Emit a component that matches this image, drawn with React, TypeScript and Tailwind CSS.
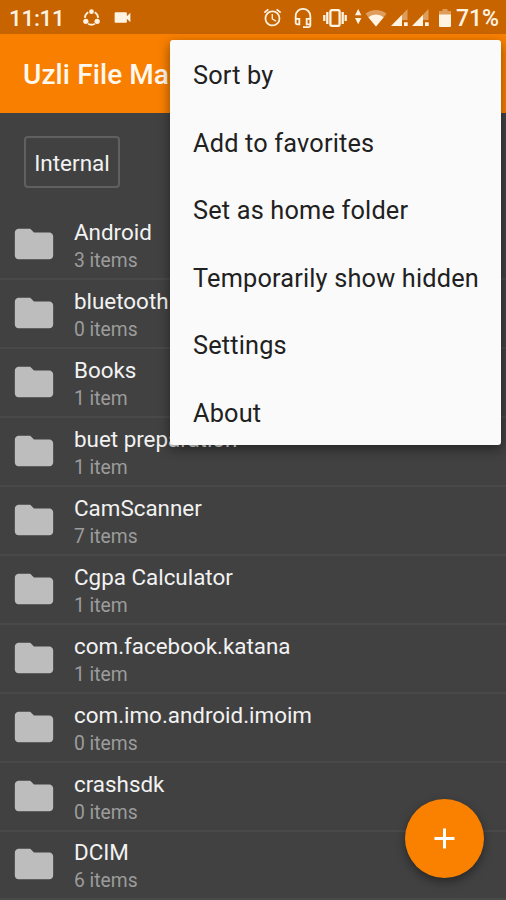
import * as React from "react"
import { MdAlarm, MdFolder, MdVideocam, MdOutlineHeadsetMic } from "react-icons/md"

interface Folder {
  name: string
  info: string
}

const folders: Folder[] = [
  { name: "Android", info: "3 items" },
  { name: "bluetooth", info: "0 items" },
  { name: "Books", info: "1 item" },
  { name: "buet preparation", info: "1 item" },
  { name: "CamScanner", info: "7 items" },
  { name: "Cgpa Calculator", info: "1 item" },
  { name: "com.facebook.katana", info: "1 item" },
  { name: "com.imo.android.imoim", info: "0 items" },
  { name: "crashsdk", info: "0 items" },
  { name: "DCIM", info: "6 items" },
]

const menuItems = [
  "Sort by",
  "Add to favorites",
  "Set as home folder",
  "Temporarily show hidden",
  "Settings",
  "About",
]

function ShareRingIcon() {
  return (
    <svg width="17" height="17" viewBox="0 0 18 18" fill="none" stroke="currentColor" strokeWidth="1.9">
      <path d="M5.6 3.4A6.9 6.9 0 0 0 2 9.4M12.4 3.4a6.9 6.9 0 0 1 3.6 6M5.4 15.6a7 7 0 0 0 7.2 0" />
      <g fill="currentColor" stroke="none">
        <circle cx="9" cy="2.8" r="2.5" />
        <circle cx="3" cy="13" r="2.8" />
        <circle cx="15" cy="13" r="2.8" />
      </g>
    </svg>
  )
}

function VibrateIcon() {
  return (
    <svg width="24" height="18" viewBox="0 0 24 18" fill="none" stroke="currentColor" strokeWidth="2.3">
      <rect x="7.4" y="1.2" width="9.2" height="15.6" rx="1.5" />
      <path d="M4.3 3v12M19.7 3v12M1.3 6v6M22.7 6v6" />
    </svg>
  )
}

function WifiIcon() {
  return (
    <svg width="32" height="18" viewBox="0 0 32 18" fill="currentColor">
      <path d="M0 6.2 3.2 0l3.2 6.2zM0 9l3.2 6.2L6.4 9z" />
      <path d="M10.5 4.8a16.5 16.5 0 0 1 21 0L21 17.5z" opacity="0.4" />
      <path d="M13.3 8.2a12 12 0 0 1 15.4 0L21 17.5z" />
    </svg>
  )
}

function SignalIcon() {
  return (
    <svg width="17" height="17" viewBox="0 0 17 17" fill="currentColor">
      <path d="M16.5 0v11H11V5.7z" opacity="0.4" />
      <path d="M11 5.7V17H0z" />
      <path d="M13 13.3h3.7V17H13z" />
    </svg>
  )
}

function BatteryIcon() {
  return (
    <svg width="12" height="18" viewBox="0 0 12 18" fill="currentColor">
      <path d="M3.5 0h5v2H12v4H0V2h3.5z" opacity="0.4" />
      <path d="M0 5.5h12V17a1 1 0 0 1-1 1H1a1 1 0 0 1-1-1z" />
    </svg>
  )
}

function StatusBar() {
  return (
    <div className="flex h-[34px] shrink-0 items-center bg-[#c86400] pl-[9px] pr-[7px] pt-px text-[#fff3e4]">
      <span className="w-[74px] pt-px text-[22.5px] font-medium leading-none tracking-[-0.3px]">11:11</span>
      <span className="w-[29px]">
        <ShareRingIcon />
      </span>
      <MdVideocam size={21} />
      <div className="ml-auto flex items-center">
        <MdAlarm size={21} className="mr-[9px]" />
        <MdOutlineHeadsetMic size={22} className="mr-[9px]" />
        <VibrateIcon />
        <span className="ml-[8px] mr-[4px]">
          <WifiIcon />
        </span>
        <span className="mr-[4px]">
          <SignalIcon />
        </span>
        <span className="mr-[10px]">
          <SignalIcon />
        </span>
        <BatteryIcon />
        <span className="ml-[5px] pt-[2px] text-[23px] font-medium leading-none">71%</span>
      </div>
    </div>
  )
}

function FolderRow({ name, info }: Folder) {
  return (
    <li className="flex h-[68.9px] items-center border-b-2 border-[#494949] pl-[11px]">
      <MdFolder size={46} className="mb-px shrink-0 text-[#bdbdbd]" />
      <div className="ml-[17px] flex flex-col pt-[5px]">
        <span className="text-[22.4px] leading-[27px] text-[#f2f2f2]">{name}</span>
        <span className="text-[19.3px] leading-[29px] text-[#9c9c9c]">{info}</span>
      </div>
    </li>
  )
}

function OverflowMenu() {
  return (
    <ul className="absolute left-[170px] top-[40px] flex h-[405px] w-[331px] flex-col rounded-[3px] bg-[#fafafa] pt-[2.6px] shadow-[0_4px_12px_rgba(0,0,0,0.45)]">
      {menuItems.map((item) => (
        <li
          key={item}
          className="flex h-[67.5px] shrink-0 items-center pl-[23px] text-[25.3px] tracking-[0.18px] text-[#212121]"
        >
          {item}
        </li>
      ))}
    </ul>
  )
}

export default function App() {
  return (
    <div className="relative flex h-[900px] w-[506px] flex-col overflow-hidden bg-[#414141] font-[Roboto,sans-serif]">
      <StatusBar />
      <header className="flex h-[79px] shrink-0 items-center bg-[#f97f00] pl-[23px] pt-[3px]">
        <h1 className="text-[28px] font-medium tracking-[0.1px] text-[#fff8ef]">Uzli File Manager</h1>
      </header>
      <div className="flex h-[98.5px] shrink-0 items-center pl-[24px]">
        <button className="h-[52px] w-[96px] rounded-[4px] border-2 border-[#606060] pt-[3px] text-[22.5px] text-[#f2f2f2]">
          Internal
        </button>
      </div>
      <ul className="flex flex-col">
        {folders.map((folder) => (
          <FolderRow key={folder.name} {...folder} />
        ))}
      </ul>
      <button className="absolute left-[405px] top-[799px] flex size-[79px] items-center justify-center rounded-full bg-[#fa8000] text-white shadow-[0_4px_10px_rgba(0,0,0,0.4)]">
        <svg width="21" height="21" viewBox="0 0 21 21" stroke="currentColor" strokeWidth="3">
          <path d="M10.5 0.5v20M0.5 10.5h20" />
        </svg>
      </button>
      <OverflowMenu />
    </div>
  )
}
